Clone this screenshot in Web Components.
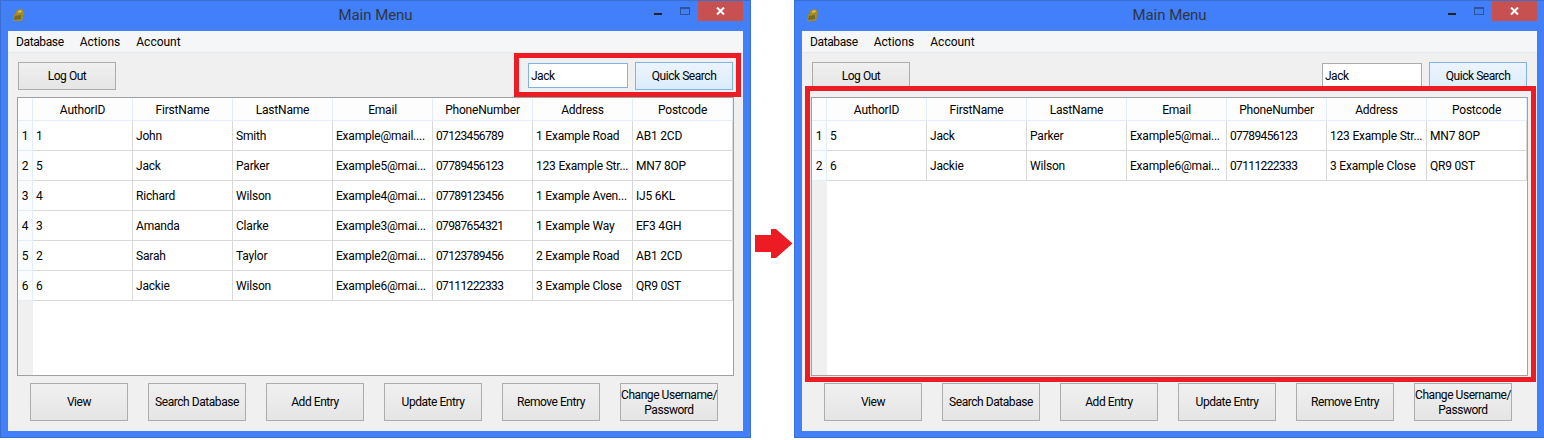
<!DOCTYPE html>
<html>
<head>
<meta charset="utf-8">
<title>Main Menu</title>
<style>
html,body{margin:0;padding:0;background:#fff;}
body{width:1544px;height:440px;overflow:hidden;display:flex;align-items:flex-start;font-family:Roboto,"Liberation Sans",sans-serif;font-size:12px;color:#000;}
</style>
</head>
<body>
<main-window>
    <win-button slot="top-left" label="Log Out"></win-button>
    <search-box slot="top-right" value="Jack" focused hovered></search-box>
    <data-table slot="table" id="allRows"></data-table>
    <red-box slot="overlay" left="513" top="52" width="227" height="44"></red-box>
</main-window>
<flow-arrow></flow-arrow>
<main-window>
    <win-button slot="top-left" label="Log Out"></win-button>
    <search-box slot="top-right" value="Jack" hovered></search-box>
    <data-table slot="table" id="foundRows"></data-table>
    <red-box slot="overlay" left="10" top="85" width="731" height="296"></red-box>
</main-window>

<script>
class WinButton extends HTMLElement{
    connectedCallback(){
        if(this.shadowRoot) return;
        this.attachShadow({mode:"open"});
        this.shadowRoot.innerHTML=`
        <style>
        :host{display:block;width:98px;height:var(--btn-height,28px);}
        div{
            box-sizing:border-box;width:100%;height:100%;padding-top:1px;
            display:flex;align-items:center;justify-content:center;text-align:center;
            border:1px solid #acacac;
            background:linear-gradient(#f0f0f0,#e5e5e5);
            font-size:12px;line-height:15px;letter-spacing:-.45px;color:#000;white-space:nowrap;
        }
        :host([hovered]) div{border-color:#7eb4ea;background:linear-gradient(#ecf4fc,#dcecfc);}
        </style>
        <div>${this.getAttribute("label")}</div>`;
    }
}
customElements.define("win-button",WinButton);

class SearchBox extends HTMLElement{
    connectedCallback(){
        this.attachShadow({mode:"open"});
        this.shadowRoot.innerHTML=`
        <style>
        :host{display:flex;gap:7px;align-items:flex-start;}
        .field{
            box-sizing:border-box;width:100px;height:25px;margin-top:1px;
            display:flex;align-items:center;padding-left:2px;
            background:#fff;border:1px solid #ababab;
            font-size:12px;letter-spacing:-.5px;
        }
        :host([focused]) .field{border-color:#7eb4ea;}
        </style>
        <div class="field">${this.getAttribute("value")}</div>
        <win-button label="Quick Search" hovered></win-button>`;
    }
}
customElements.define("search-box",SearchBox);

class DataTable extends HTMLElement{
    constructor(){
        super();
        this.shadowDOM=this.attachShadow({mode:"open"});
    }
    set data(d){
        this._data=d;
        this.render();
    }
    render(){
        const head=this._data.columns.map(c=>`<div class="hd">${c}</div>`).join("");
        const rows=this._data.rows.map((r,i)=>`
            <div class="row">
                <div class="num">${i+1}</div>
                ${r.map(c=>`<div class="cell${/^\d{5,}$/.test(c)?" digits":""}">${c}</div>`).join("")}
            </div>`).join("");
        this.shadowDOM.innerHTML=`
        <style>
        :host{
            display:flex;flex-direction:column;box-sizing:border-box;
            width:717px;height:279px;margin-left:9px;
            border:1px solid #a0a0a0;background:#fff;
            font-size:12px;letter-spacing:-.2px;color:#000;
        }
        .row{display:grid;grid-template-columns:15px repeat(7,100px);}
        .head{height:23px;background:#fdfdfe;}
        .head .corner,.hd{border-right:1px solid #e3eefc;border-bottom:1px solid #e3eefc;}
        .hd{display:flex;align-items:center;justify-content:center;padding-top:2px;}
        .row:not(.head){height:30px;}
        .num{
            display:flex;align-items:center;justify-content:center;
            background:#fbfcfe;border-right:1px solid #e3eefc;border-bottom:1px solid #e3eefc;
        }
        .cell{
            display:flex;align-items:center;padding-left:3px;overflow:hidden;white-space:nowrap;
            border-right:1px solid #d9d9d9;border-bottom:1px solid #d9d9d9;
        }
        .digits{letter-spacing:-.62px;}
        .rest{flex:1;width:15px;background:#f0f0f0;}
        *{box-sizing:border-box;}
        </style>
        <div class="row head"><div class="corner"></div>${head}</div>
        ${rows}
        <div class="rest"></div>`;
    }
}
customElements.define("data-table",DataTable);

class RedBox extends HTMLElement{
    connectedCallback(){
        this.attachShadow({mode:"open"});
        this.shadowRoot.innerHTML=`
        <style>
        :host{
            position:absolute;box-sizing:border-box;pointer-events:none;
            left:${this.getAttribute("left")}px;top:${this.getAttribute("top")}px;
            width:${this.getAttribute("width")}px;height:${this.getAttribute("height")}px;
            border:5px solid #ed1c24;
        }
        </style>`;
    }
}
customElements.define("red-box",RedBox);

class FlowArrow extends HTMLElement{
    connectedCallback(){
        this.attachShadow({mode:"open"});
        this.shadowRoot.innerHTML=`
        <style>
        :host{display:block;flex:none;width:43px;box-sizing:border-box;padding:229px 0 0 4px;}
        svg{display:block;}
        </style>
        <svg width="38" height="30" viewBox="0 0 38 30"><polygon fill="#ed1c24" points="0,6 16,6 16,0 21,0 37.5,14.5 21,29 16,29 16,23 0,23"/></svg>`;
    }
}
customElements.define("flow-arrow",FlowArrow);

class MainWindow extends HTMLElement{
    connectedCallback(){
        this.attachShadow({mode:"open"});
        const names=["View","Search Database","Add Entry","Update Entry","Remove Entry","Change Username/<br>Password"];
        this.shadowRoot.innerHTML=`
        <style>
        :host{
            display:block;position:relative;flex:none;box-sizing:border-box;
            width:751px;height:438px;
            background:#417ffb;border:1px solid #3a6fd2;
            padding:0 7px 7px 7px;
        }
        .title{position:relative;height:30px;}
        .caption{
            text-align:center;font-size:15px;line-height:29px;letter-spacing:-.05px;color:#2f3640;
        }
        .icon{position:absolute;left:5px;top:8px;}
        .controls{position:absolute;right:0;top:0;display:flex;align-items:flex-start;}
        .close{width:45px;height:20px;background:#c75050;display:flex;align-items:center;justify-content:center;}
        .max{margin:6px 8px 0 0;}
        .min{margin:12px 18px 0 0;}
        .client{
            box-sizing:border-box;height:400px;background:#f0f0f0;
            display:flex;flex-direction:column;
        }
        .menu{
            height:20px;background:#f5f6f7;border-bottom:1px solid #e8e9ea;
            display:flex;align-items:center;box-sizing:content-box;padding-top:1px;margin-bottom:-1px;
        }
        .menu span{padding:0 8px;}
        .menu span:first-child{letter-spacing:-.38px;}
        .top{display:flex;justify-content:space-between;padding:10px 10px 0 10px;height:28px;margin-bottom:7px;}
        .bottom{display:flex;gap:20px;padding:7px 0 0 22px;--btn-height:38px;}
        </style>
        <div class="title">
            <svg class="icon" width="12" height="13" viewBox="0 0 12 13">
                <polygon fill="#a98a1c" points="3,2 7,0 10,1 10,3 11,3 9,12 0,12 1,6 3,5"/>
                <polygon fill="#6f6a2a" points="2,7 8,6 8,10 1,11"/>
                <polygon fill="#d3c05a" points="5,2 8,1 9,3 5,4"/>
            </svg>
            <div class="caption">Main Menu</div>
            <div class="controls">
                <svg class="min" width="8" height="2"><rect width="8" height="2" fill="#222"/></svg>
                <svg class="max" width="10" height="8" viewBox="0 0 10 8">
                    <rect x=".5" y=".5" width="9" height="7" fill="none" stroke="#2f5398"/>
                    <rect width="10" height="2" fill="#2f5398"/>
                </svg>
                <div class="close">
                    <svg width="9" height="8" viewBox="0 0 9 8"><path d="M1 .5 8 7.5M8 .5 1 7.5" stroke="#fff" stroke-width="2"/></svg>
                </div>
            </div>
        </div>
        <div class="client">
            <div class="menu"><span>Database</span><span>Actions</span><span>Account</span></div>
            <div class="top"><slot name="top-left"></slot><slot name="top-right"></slot></div>
            <slot name="table"></slot>
            <div class="bottom">${names.map(n=>`<win-button label="${n}"></win-button>`).join("")}</div>
        </div>
        <slot name="overlay"></slot>`;
    }
}
customElements.define("main-window",MainWindow);

const columns=["AuthorID","FirstName","LastName","Email","PhoneNumber","Address","Postcode"];
document.getElementById("allRows").data={columns,rows:[
    ["1","John","Smith","Example@mail....","07123456789","1 Example Road","AB1 2CD"],
    ["5","Jack","Parker","Example5@mai...","07789456123","123 Example Str...","MN7 8OP"],
    ["4","Richard","Wilson","Example4@mai...","07789123456","1 Example Aven...","IJ5 6KL"],
    ["3","Amanda","Clarke","Example3@mai...","07987654321","1 Example Way","EF3 4GH"],
    ["2","Sarah","Taylor","Example2@mai...","07123789456","2 Example Road","AB1 2CD"],
    ["6","Jackie","Wilson","Example6@mai...","07111222333","3 Example Close","QR9 0ST"]
]};
document.getElementById("foundRows").data={columns,rows:[
    ["5","Jack","Parker","Example5@mai...","07789456123","123 Example Str...","MN7 8OP"],
    ["6","Jackie","Wilson","Example6@mai...","07111222333","3 Example Close","QR9 0ST"]
]};
</script>
</body>
</html>
